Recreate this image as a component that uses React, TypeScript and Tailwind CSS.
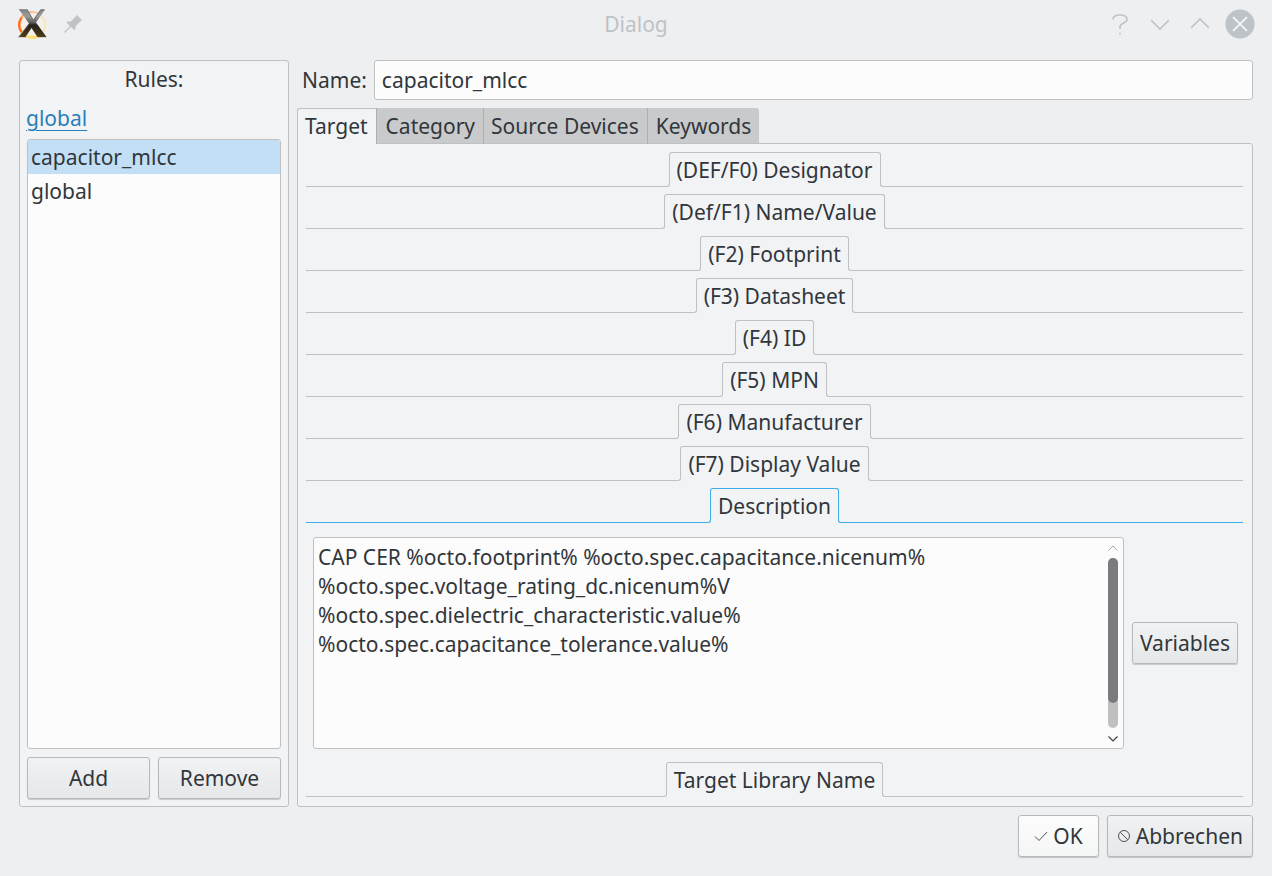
import { useState } from "react";
import type { ReactNode } from "react";

function LogoIcon() {
  return (
    <svg width="32" height="32" viewBox="0 0 32 32" aria-hidden="true">
      <defs>
        <linearGradient id="bar" x1="0" y1="0" x2="0" y2="1">
          <stop offset="0" stopColor="#858585" />
          <stop offset="0.25" stopColor="#9c9c9c" />
          <stop offset="0.48" stopColor="#5a5a5a" />
          <stop offset="0.56" stopColor="#26241f" />
          <stop offset="0.8" stopColor="#3a2f18" />
          <stop offset="1" stopColor="#4e3e1a" />
        </linearGradient>
        <linearGradient id="ring" x1="0" y1="0" x2="1" y2="0.5">
          <stop offset="0" stopColor="#ff6a2c" />
          <stop offset="0.4" stopColor="#ffb27a" />
          <stop offset="0.75" stopColor="#fbdcb4" />
          <stop offset="1" stopColor="#ffe4ac" />
        </linearGradient>
      </defs>
      <ellipse cx="16" cy="29" rx="15" ry="1.200" fill="#c9cacb" />
      <circle cx="16" cy="17" r="13" fill="#f3f0ee" stroke="url(#ring)" strokeWidth="1.600" />
      <path d="M7 9A12.500 12.500 0 0 0 6 24" fill="none" stroke="#ffc27a" strokeWidth="2" />
      <path d="M5.500 9.500A13 13 0 0 0 5.500 24" fill="none" stroke="#ff6a1e" strokeWidth="2" />
      <path d="M11 28A13 13 0 0 0 23 27.500" fill="none" stroke="#ffe06a" strokeWidth="3" />
      <path d="M24.500 1.500H29L20 14.500L30.500 29H21.500L15.500 20L9.500 29H2.500L13 15.500L3 1.500H11.500L17.200 11.500Z" fill="url(#bar)" />
      <path d="M3 1.800H11.300L17.500 12.300L24.800 1.800H28.800" fill="none" stroke="#686868" strokeWidth="0.700" />
      <path d="M12.500 16.500L3.500 28.500" fill="none" stroke="#8a744a" strokeWidth="0.800" />
    </svg>
  );
}

function PinIcon() {
  return (
    <svg width="18" height="18" viewBox="0 0 18 18" aria-hidden="true" fill="#bdc3c7">
      <path d="M13 0L18 5L11.500 11.200V14L10.500 15L6.900 12L1 17.800L0 17L6 11.100L2.500 7.500L3.500 6.500H6.800Z" />
    </svg>
  );
}

const titleStroke = { fill: "none", stroke: "#bdc3c7", strokeWidth: 1.6 };

function TitleBar() {
  return (
    <header className="grid h-12 grid-cols-[1fr_auto_1fr] items-center px-4">
      <div className="flex items-center gap-4">
        <LogoIcon />
        <button type="button" aria-label="Keep on all desktops">
          <PinIcon />
        </button>
      </div>
      <h1 className="text-[#bdc3c7]">Dialog</h1>
      <div className="flex items-center justify-end gap-2">
        <button type="button" aria-label="Help">
          <svg width="32" height="32" viewBox="0 0 32 32" {...titleStroke}>
            <path d="M9 11.500C9 8.500 12 7 16 7C20 7 23 8.500 23 11.500C23 15.500 16 14.500 16 19V21M16 24.800V26.500" />
          </svg>
        </button>
        <button type="button" aria-label="Minimize">
          <svg width="32" height="32" viewBox="0 0 32 32" {...titleStroke}>
            <path d="M7 12L16 21L25 12" />
          </svg>
        </button>
        <button type="button" aria-label="Maximize">
          <svg width="32" height="32" viewBox="0 0 32 32" {...titleStroke}>
            <path d="M7 20L16 11L25 20" />
          </svg>
        </button>
        <button type="button" aria-label="Close">
          <svg width="32" height="32" viewBox="0 0 32 32">
            <circle cx="16" cy="16" r="14.500" fill="#bdc3c7" />
            <path d="M9 9L23 23M23 9L9 23" fill="none" stroke="#fcfcfc" strokeWidth="1.600" />
          </svg>
        </button>
      </div>
    </header>
  );
}

function PushButton({ children, className, light }: { children: ReactNode; className?: string; light?: boolean }) {
  const face = light ? "from-[#fcfcfc] to-[#f5f6f6]" : "from-[#f1f2f3] to-[#e6e7e9]";
  return (
    <button
      type="button"
      className={`flex h-[42px] items-center justify-center gap-[5px] rounded-[3px] border border-[#b7b8ba] bg-linear-to-b shadow-[0_1px_1px_rgba(0,0,0,0.18)] ${face} ${className ?? ""}`}
    >
      {children}
    </button>
  );
}

function RulesPanel() {
  const [selected, setSelected] = useState("capacitor_mlcc");
  return (
    <section className="flex w-[270px] shrink-0 flex-col rounded-[3px] border border-[#bfc0c2] bg-[#f2f3f5] p-[7px]">
      <h2 className="-mt-[3px] text-center">Rules:</h2>
      <a href="#global" className="mt-2.5 mb-1.5 -ml-px self-start text-[#2980b9] underline decoration-1 underline-offset-4">
        global
      </a>
      <ul className="flex-1 rounded-[3px] border border-[#bfc0c2] bg-[#fcfcfc]">
        {["capacitor_mlcc", "global"].map((rule) => (
          <li key={rule}>
            <button
              type="button"
              onClick={() => setSelected(rule)}
              className={`h-[34px] w-full px-[3px] text-left ${rule === selected ? "bg-[#c2dff5]" : ""}`}
            >
              {rule}
            </button>
          </li>
        ))}
      </ul>
      <div className="mt-2 grid grid-cols-2 gap-2">
        <PushButton>Add</PushButton>
        <PushButton>Remove</PushButton>
      </div>
    </section>
  );
}

function FoldHeader({ label, open }: { label: string; open?: boolean }) {
  const line = open ? "border-[#3daee9]" : "border-[#bfc0c2]";
  return (
    <div className="flex items-end">
      <span className={`-mr-px h-1 flex-1 rounded-br-[3px] border-r border-b ${line}`} />
      <button type="button" aria-expanded={!!open} className={`mb-[3px] h-8 rounded-t-[3px] border-x border-t px-[7px] pt-[3px] ${line}`}>
        {label}
      </button>
      <span className={`-ml-px h-1 flex-1 rounded-bl-[3px] border-b border-l ${line}`} />
    </div>
  );
}

function DescriptionEditor() {
  return (
    <div className="mt-[7px] mb-1.5 flex items-center gap-2 pr-[5px] pl-[7px]">
      <div className="flex h-[212px] flex-1 rounded-[3px] border border-[#bfc0c2] bg-[#fcfcfc]">
        <textarea
          aria-label="Description"
          className="flex-1 resize-none overflow-hidden bg-transparent px-1 py-[5px] leading-[29px] outline-none"
          defaultValue={
            "CAP CER %octo.footprint% %octo.spec.capacitance.nicenum%\n%octo.spec.voltage_rating_dc.nicenum%V\n%octo.spec.dielectric_characteristic.value%\n%octo.spec.capacitance_tolerance.value%"
          }
        />
        <div className="flex w-5 flex-col items-center" aria-hidden="true">
          <svg width="10" height="20" viewBox="0 0 10 20" fill="none" stroke="#a3a5a7">
            <path d="M0.500 12.500L5 8L9.500 12.500" />
          </svg>
          <div className="w-2.5 flex-1 rounded-full bg-[#bfc0c2]">
            <div className="h-[85%] rounded-full bg-[#7a7b7f]" />
          </div>
          <svg width="10" height="20" viewBox="0 0 10 20" fill="none" stroke="#3b4045" strokeWidth="1.200">
            <path d="M0.500 8.500L5 13L9.500 8.500" />
          </svg>
        </div>
      </div>
      <PushButton className="px-[7px]">Variables</PushButton>
    </div>
  );
}

const fields = [
  "(DEF/F0) Designator",
  "(Def/F1) Name/Value",
  "(F2) Footprint",
  "(F3) Datasheet",
  "(F4) ID",
  "(F5) MPN",
  "(F6) Manufacturer",
  "(F7) Display Value",
];

const idleTab = "h-9 border-b border-l border-b-[#bfc0c2] border-l-[#aeafb1] bg-[#c9cacc] pt-px";

function RuleEditor() {
  return (
    <section className="flex min-w-0 flex-1 flex-col">
      <div className="flex items-center gap-[7px] pl-[5px]">
        <label htmlFor="rule-name">Name:</label>
        <input
          id="rule-name"
          defaultValue="capacitor_mlcc"
          className="h-10 min-w-0 flex-1 rounded-[3px] border border-[#bfc0c2] bg-[#fcfcfc] px-[7px] outline-none"
        />
      </div>
      <div role="tablist" className="z-10 mt-2 -mb-px flex items-start">
        <button type="button" role="tab" aria-selected="true" className="h-9 rounded-tl-[3px] border-t border-l border-[#bfc0c2] bg-[#f2f3f5] pr-2 pl-[7px]">
          Target
        </button>
        <button type="button" role="tab" aria-selected="false" className={`px-[9px] pr-2 ${idleTab}`}>
          Category
        </button>
        <button type="button" role="tab" aria-selected="false" className={`px-2 pl-[7px] ${idleTab}`}>
          Source Devices
        </button>
        <button type="button" role="tab" aria-selected="false" className={`rounded-tr-[3px] px-2 ${idleTab}`}>
          Keywords
        </button>
      </div>
      <div role="tabpanel" className="flex flex-1 flex-col gap-[7px] rounded-b-[3px] rounded-tr-[3px] border border-[#bfc0c2] bg-[#f2f3f5] py-2 pr-[9px] pl-2">
        {fields.map((f) => (
          <FoldHeader key={f} label={f} />
        ))}
        <FoldHeader label="Description" open />
        <DescriptionEditor />
        <FoldHeader label="Target Library Name" />
      </div>
    </section>
  );
}

export default function App() {
  return (
    <div className="flex min-h-screen flex-col bg-[#eeeff1] font-['Noto_Sans',sans-serif] text-[21px] leading-[29px] text-[#31363b]">
      <TitleBar />
      <main className="flex flex-1 flex-col gap-2 px-[19px] pt-3 pb-[19px]">
        <div className="flex flex-1 gap-2">
          <RulesPanel />
          <RuleEditor />
        </div>
        <footer className="flex justify-end gap-2">
          <PushButton light className="px-[15px]">
            <svg width="14" height="14" viewBox="0 0 14 14" fill="none" stroke="#4d5257" aria-hidden="true">
              <path d="M1 7.500L5 11.500L13 3" />
            </svg>
            OK
          </PushButton>
          <PushButton className="px-[9px]">
            <svg width="14" height="14" viewBox="0 0 14 14" fill="none" stroke="#4d5257" aria-hidden="true">
              <circle cx="7" cy="7" r="5.500" />
              <path d="M3.200 3.200L10.800 10.800" />
            </svg>
            Abbrechen
          </PushButton>
        </footer>
      </main>
    </div>
  );
}
